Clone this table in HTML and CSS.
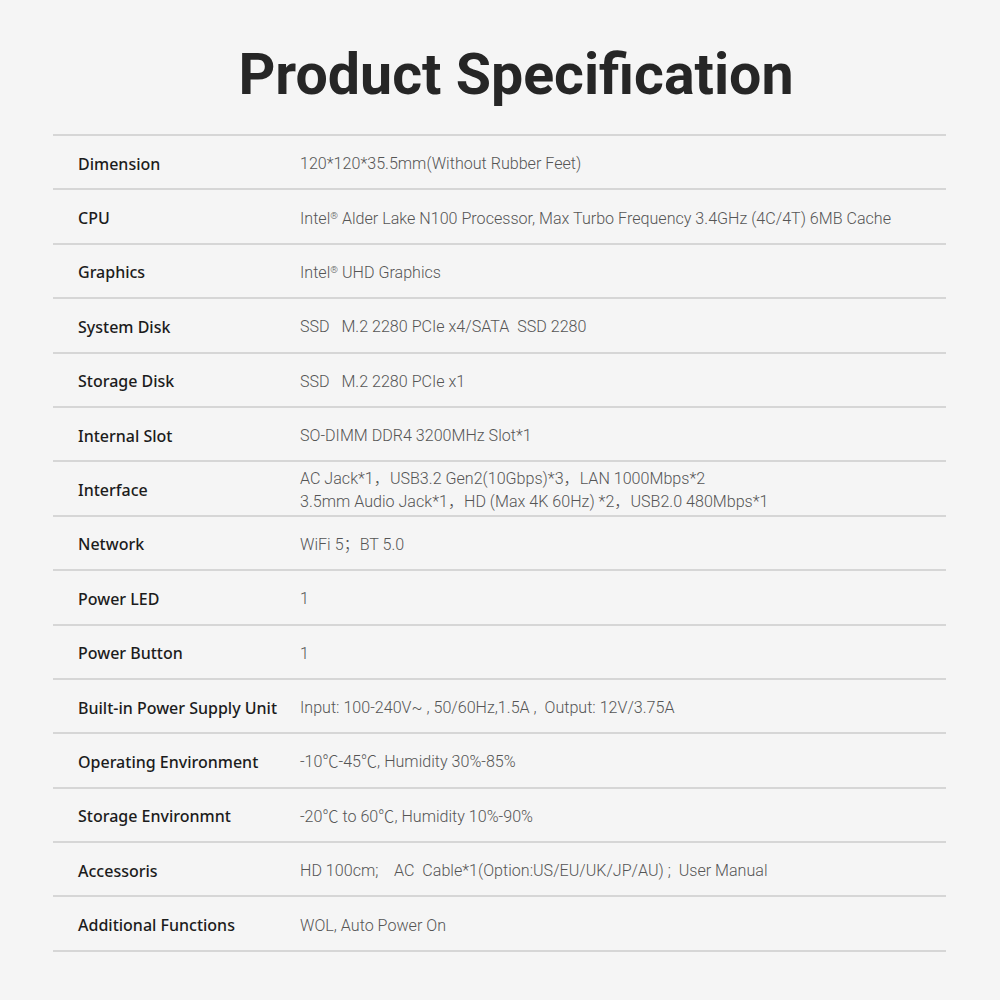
FILE: index.html
```html
<!DOCTYPE html>
<html>
<head>
<meta charset="utf-8">
<link rel="stylesheet" href="styles.css">
</head>
<body>
<main class="page">
  <h1 class="title">Product Specification</h1>
  <div class="specs">
    <div class="row"><div class="label">Dimension</div><div class="value">120*120*35.5mm(Without Rubber Feet)</div></div>
    <div class="row"><div class="label">CPU</div><div class="value">Intel<span class="reg">®</span> Alder Lake N100 Processor, Max Turbo Frequency 3.4GHz (4C/4T) 6MB Cache</div></div>
    <div class="row"><div class="label">Graphics</div><div class="value">Intel<span class="reg">®</span> UHD Graphics</div></div>
    <div class="row"><div class="label">System Disk</div><div class="value">SSD&nbsp;&nbsp; M.2 2280 PCIe x4/SATA&nbsp; SSD 2280</div></div>
    <div class="row"><div class="label">Storage Disk</div><div class="value">SSD&nbsp;&nbsp; M.2 2280 PCIe x1</div></div>
    <div class="row"><div class="label">Internal Slot</div><div class="value">SO-DIMM DDR4 3200MHz Slot*1</div></div>
    <div class="row"><div class="label">Interface</div><div class="value">AC Jack*1，USB3.2 Gen2(10Gbps)*3，LAN 1000Mbps*2<br>3.5mm Audio Jack*1，HD (Max 4K 60Hz) *2，USB2.0 480Mbps*1</div></div>
    <div class="row"><div class="label">Network</div><div class="value">WiFi 5；BT 5.0</div></div>
    <div class="row"><div class="label">Power LED</div><div class="value">1</div></div>
    <div class="row"><div class="label">Power Button</div><div class="value">1</div></div>
    <div class="row"><div class="label">Built-in Power Supply Unit</div><div class="value">Input: 100-240V~ , 50/60Hz,1.5A ,&nbsp; Output: 12V/3.75A</div></div>
    <div class="row"><div class="label">Operating Environment</div><div class="value">-10℃-45℃, Humidity 30%-85%</div></div>
    <div class="row"><div class="label">Storage Environmnt</div><div class="value">-20℃ to 60℃, Humidity 10%-90%</div></div>
    <div class="row"><div class="label">Accessoris</div><div class="value">HD 100cm;&nbsp;&nbsp;&nbsp; AC&nbsp; Cable*1(Option:US/EU/UK/JP/AU) ;&nbsp; User Manual</div></div>
    <div class="row"><div class="label">Additional Functions</div><div class="value">WOL, Auto Power On</div></div>
  </div>
</main>
</body>
</html>
```

FILE: styles.css
```css
html, body {
  margin: 0;
  padding: 0;
  background: #f5f5f5;
}
body {
  font-family: "Noto Sans", "Noto Sans CJK SC", sans-serif;
  width: 1000px;
  height: 1000px;
  overflow: hidden;
}
.page {
  padding: 0 54px 0 53px;
}
.title {
  margin: 0;
  height: 134px;
  box-sizing: border-box;
  padding-top: 40px;
  padding-left: 33px;
  text-align: center;
  font-family: Roboto, sans-serif;
  font-size: 57.3px;
  font-weight: 700;
  line-height: 70px;
  color: #262626;
}
.specs {
  border-top: 2px solid #d6d6d6;
}
.row {
  display: flex;
  align-items: center;
  height: 54.4px;
  box-sizing: border-box;
  padding-top: 3px;
  border-bottom: 2px solid #d6d6d6;
}
.label {
  width: 222px;
  padding-left: 25px;
  flex: none;
  font-size: 16px;
  font-weight: 500;
  color: #1c1c1c;
}
.value {
  font-family: Roboto, "Noto Sans CJK SC", sans-serif;
  font-size: 16.1px;
  font-weight: 300;
  color: #555;
  line-height: 23px;
}
.reg {
  font-size: 0.6em;
  vertical-align: 0.55em;
  line-height: 0;
}
```
